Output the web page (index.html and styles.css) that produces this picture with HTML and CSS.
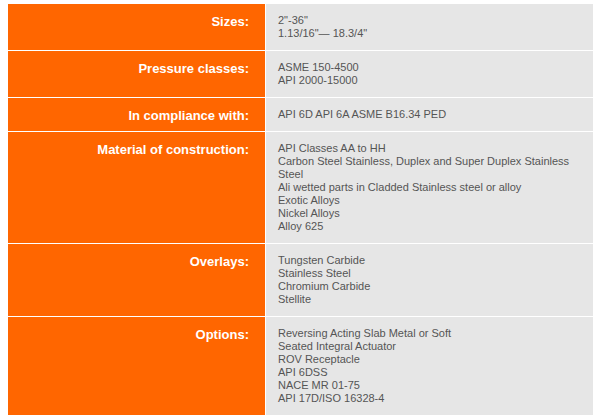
FILE: index.html
```html
<!DOCTYPE html>
<html>
<head>
<meta charset="utf-8">
<link rel="stylesheet" href="styles.css">
</head>
<body>
<div class="specs">
  <div class="label">Sizes:</div>
  <div class="value">2"-36"<br>1.13/16"— 18.3/4"</div>

  <div class="label">Pressure classes:</div>
  <div class="value">ASME 150-4500<br>API 2000-15000</div>

  <div class="label">In compliance with:</div>
  <div class="value">API 6D API 6A ASME B16.34 PED</div>

  <div class="label">Material of construction:</div>
  <div class="value">API Classes AA to HH<br>Carbon Steel Stainless, Duplex and Super Duplex Stainless Steel<br>Ali wetted parts in Cladded Stainless steel or alloy<br>Exotic Alloys<br>Nickel Alloys<br>Alloy 625</div>

  <div class="label">Overlays:</div>
  <div class="value">Tungsten Carbide<br>Stainless Steel<br>Chromium Carbide<br>Stellite</div>

  <div class="label">Options:</div>
  <div class="value">Reversing Acting Slab Metal or Soft<br>Seated Integral Actuator<br>ROV Receptacle<br>API 6DSS<br>NACE MR 01-75<br>API 17D/ISO 16328-4</div>
</div>
</body>
</html>
```
FILE: styles.css
```css
html, body {
  margin: 0;
  padding: 0;
  background: #ffffff;
}
body {
  padding: 4px 8px;
  font-family: "Liberation Sans", Arial, sans-serif;
}
.specs {
  display: grid;
  grid-template-columns: 257px 327px;
  column-gap: 1px;
  row-gap: 1px;
  background: #ffffff;
  width: 585px;
}
.label {
  background: #ff6600;
  color: #ffffff;
  font-weight: bold;
  font-size: 13px;
  line-height: 15px;
  text-align: right;
  padding: 10px 16px 0 0;
}
.value {
  background: #e6e6e6;
  color: #555555;
  font-size: 11px;
  line-height: 13px;
  padding: 10px 20px 10px 12px;
}
```
